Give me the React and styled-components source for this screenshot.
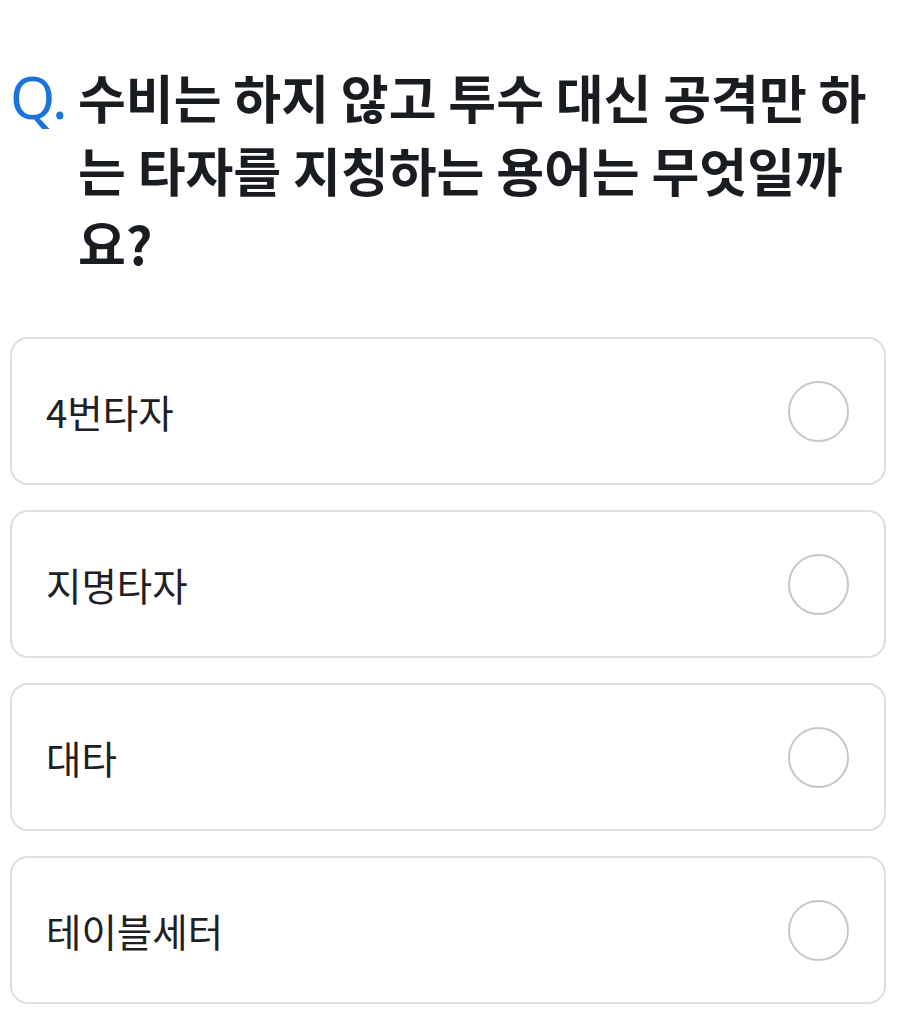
import React from "react";
import styled, { createGlobalStyle } from "styled-components";

const Global = createGlobalStyle`
  html, body { margin: 0; padding: 0; background: #ffffff; }
  body { font-family: "Noto Sans CJK KR", "Noto Sans", sans-serif; }
`;

const Page = styled.div`
  padding: 60px 10px 0 10px;
  display: flex;
  flex-direction: column;
`;

const Question = styled.h1`
  margin: 0;
  display: flex;
  align-items: baseline;
  font-size: 52px;
  line-height: 73px;
  font-weight: 700;
  color: #191c20;
`;

const QMark = styled.span`
  color: #1b74dc;
  flex: 0 0 auto;
  width: 68px;
  font-family: "Noto Sans", sans-serif;
  font-size: 58px;
  font-weight: 400;
  letter-spacing: -1px;
`;

const QText = styled.span`
  flex: 1;
`;

const Options = styled.ul`
  list-style: none;
  margin: 58px 0 0 0;
  padding: 0 1px 0 0;
  display: flex;
  flex-direction: column;
  gap: 25px;
`;

const Option = styled.li`
  height: 148px;
  box-sizing: border-box;
  border: 2px solid #dcdfe2;
  border-radius: 18px;
  display: flex;
  align-items: center;
  justify-content: space-between;
  padding: 0 35px 0 34px;
`;

const Label = styled.span`
  font-size: 38.5px;
  font-weight: 400;
  color: #1e2024;
`;

const Radio = styled.span`
  width: 61px;
  height: 61px;
  box-sizing: border-box;
  border: 2px solid #c3c8cc;
  border-radius: 50%;
`;

const options = ["4번타자", "지명타자", "대타", "테이블세터"];

export default function App() {
  return (
    <>
      <Global />
      <Page>
        <Question>
          <QMark>Q.</QMark>
          <QText>수비는 하지 않고 투수 대신 공격만 하는 타자를 지칭하는 용어는 무엇일까요?</QText>
        </Question>
        <Options>
          {options.map((o) => (
            <Option key={o}>
              <Label>{o}</Label>
              <Radio />
            </Option>
          ))}
        </Options>
      </Page>
    </>
  );
}
